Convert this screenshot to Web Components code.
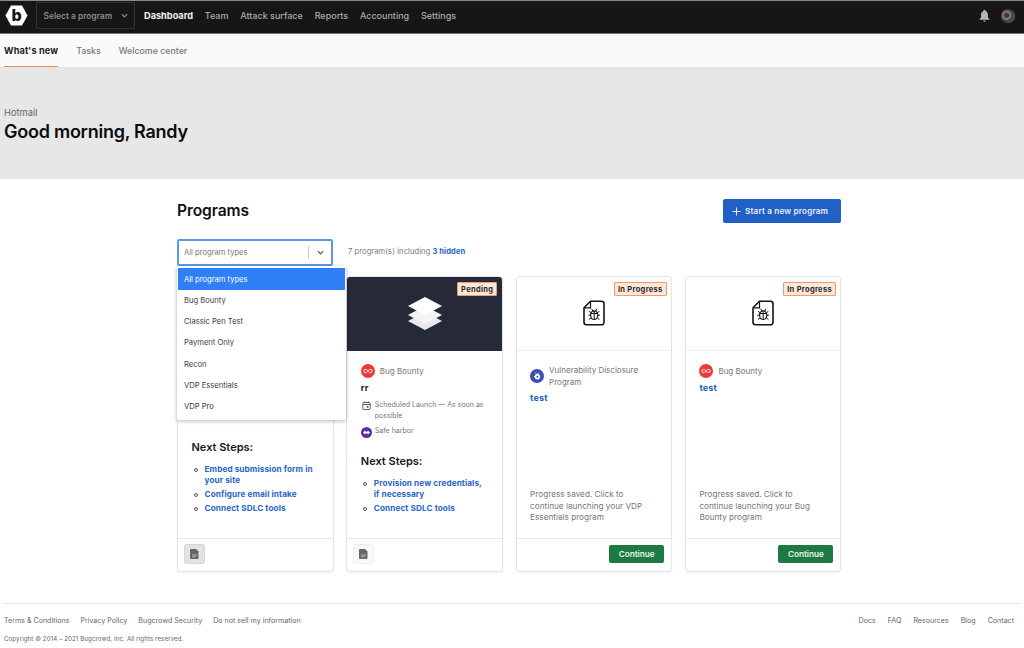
<!DOCTYPE html>
<html lang="en"><head><meta charset="utf-8"><title>Dashboard</title>
<style>
html,body{margin:0;padding:0;background:#fff;font-family:Inter,"Liberation Sans",sans-serif;color:#111}
body{width:1024px;height:648px;overflow:hidden}
</style></head><body>
<bc-app></bc-app>
<script>
const def=(name,html)=>customElements.define(name,class extends HTMLElement{
  connectedCallback(){ if(this.shadowRoot) return; const r=this.attachShadow({mode:'open'}); r.innerHTML=typeof html==='function'?html(this):html; }
});
const icons={
 chev:'<svg width="9" height="9" viewBox="0 0 10 10" fill="none" stroke="currentColor" stroke-width="1.3"><path d="M2 3.5 5 6.5 8 3.5"/></svg>',
 bounty:'<svg width="14" height="14" viewBox="0 0 14 14"><circle cx="7" cy="7" r="7" fill="#ee3b36"/><path d="M7 7C6 5.6 5.2 5.4 4.5 5.4a1.6 1.6 0 0 0 0 3.2C5.2 8.6 6 8.4 7 7c1-1.4 1.8-1.6 2.5-1.6a1.6 1.6 0 0 1 0 3.2C8.8 8.6 8 8.4 7 7Z" fill="none" stroke="#fff" stroke-width=".9"/></svg>',
 vdp:'<svg width="14" height="14" viewBox="0 0 14 14"><circle cx="7" cy="7" r="7" fill="#3f4db0"/><circle cx="7.4" cy="7.8" r="2.7" fill="#fff"/><path d="M5.4 3.8 6.6 5.4M8.6 3.8 7.8 5.4M4 7.6h1.2" stroke="#fff" stroke-width=".9"/><circle cx="7.4" cy="7.8" r="1" fill="#3f4db0"/></svg>',
 bug:'<svg width="24" height="26" viewBox="0 0 24 26" fill="none" stroke="#151515"><path d="M8.5 1.2H19.5a2.5 2.5 0 0 1 2.5 2.5v18.6a2.5 2.5 0 0 1-2.5 2.5H4.5A2.5 2.5 0 0 1 2 22.3V7.8Z" stroke-width="1.6" stroke-linejoin="round"/><path d="M8.5 1.2V7.8H2" stroke-width="1.2"/><ellipse cx="12.2" cy="15.2" rx="3.6" ry="4.3" stroke-width="1.2"/><path d="M8.6 13.5h7.2M12.2 11v8.4M9.8 8.8l1 2.2M14.8 8.8l-1 2.2M8.6 15.2H6.3M15.8 15.2h2.3M9 18l-2 1.4M15.4 18l2 1.4M9 12.6l-2-1.2M15.4 12.6l2-1.2" stroke-width="1"/></svg>',
 layers:'<svg width="36" height="34" viewBox="0 0 36 34"><path d="M18 11 35 20 18 29 1 20Z" fill="#e9e9ec" transform="translate(0 4)"/><path d="M18 6 35 15 18 24 1 15Z" fill="#f4f4f6" transform="translate(0 3)"/><path d="M18 0 35 9 18 18 1 9Z" fill="#fff"/></svg>',
 doc:'<svg width="9" height="10" viewBox="0 0 9 10"><path d="M1 0h5l2.5 2.5V9a1 1 0 0 1-1 1H1A1 1 0 0 1 0 9V1a1 1 0 0 1 1-1Z" fill="#666"/><path d="M2 6h5M2 7.8h3.5" stroke="#d8d8d8" stroke-width=".7"/></svg>',
 cal:'<svg width="9" height="9" viewBox="0 0 9 9" fill="none" stroke="#555"><rect x=".8" y="1.5" width="7.4" height="7" rx=".7" stroke-width=".9"/><path d="M.8 3.6h7.4" stroke-width="1"/><path d="M2.6.3v1.6M6.4.3v1.6" stroke-width=".8"/><rect x="4.7" y="5" width="1.7" height="1.7" fill="#555" stroke="none"/></svg>',
 harbor:'<svg width="11" height="11" viewBox="0 0 10 10"><circle cx="5" cy="5" r="5" fill="#5b2fa8"/><path d="M1.8 5 3.6 3.4 5 4.6 6.4 3.4 8.2 5 6.4 6.6 5 5.4 3.6 6.6Z" fill="#fff"/></svg>'
};
def('bc-topbar',`<style>
:host{display:flex;align-items:center;box-sizing:border-box;height:34px;background:#161616;border-top:1px solid #8a8a8a;border-bottom:1px solid #777;padding:0 9.5px 3px 5px;font-size:9px;color:#aaa;font-weight:500}
.logo{display:block;margin-right:8px}
.sel{display:flex;align-items:center;justify-content:space-between;box-sizing:border-box;width:99px;height:27px;border:1px solid #333;border-radius:1px;padding:0 5px 0 6.5px;font-size:8.4px;font-weight:600;color:#8c8c8c;margin-right:9px}
nav{display:flex;gap:11.8px}
nav b{color:#f2f2f2;font-weight:700;font-size:9.2px}
.r{margin-left:auto;display:flex;align-items:center;gap:11px}
.av{width:14px;height:14px;border-radius:50%;background:radial-gradient(circle at 40% 45%,#3a3a44 0 18%,#a08060 30%,#34343c 55%,#8a7a70 80%)}
</style>
<svg class="logo" width="23" height="21" viewBox="0 0 23 21"><path d="M6 .5H17L22.5 10.5 17 20.5H6L.5 10.5Z" fill="#fff"/><text x="11.5" y="16" text-anchor="middle" font-family="Inter,sans-serif" font-size="16" font-weight="800" fill="#161616">b</text></svg>
<div class="sel"><span>Select a program</span>${icons.chev}</div>
<nav><b>Dashboard</b><span>Team</span><span>Attack surface</span><span>Reports</span><span>Accounting</span><span>Settings</span></nav>
<div class="r"><svg width="11" height="12" viewBox="0 0 11 12"><path d="M5.5 0C6.3 0 6.7.6 6.7 1.2 8.3 1.8 9 3.2 9 5v2.5l1.5 1.7v.6H.5v-.6L2 7.5V5c0-1.8.7-3.2 2.3-3.8C4.3.6 4.7 0 5.5 0ZM4.2 10.5h2.6a1.3 1.3 0 0 1-2.6 0Z" fill="#b5b5b5"/></svg><div class="av"></div></div>`);
def('bc-subnav',`<style>
:host{display:flex;box-sizing:border-box;height:34px;background:#fafafa;border-bottom:1px solid #e4e4e4;padding:0 4px;gap:18px;font-size:8.8px;color:#777;font-weight:500}
span{display:flex;align-items:center;box-sizing:border-box;height:33px}
.on{color:#222;font-weight:700;font-size:9.2px;letter-spacing:.1px;border-bottom:1px solid #f58a4b}
</style><span class="on">What's new</span><span>Tasks</span><span>Welcome center</span>`);
def('bc-hero',`<style>
:host{display:block;box-sizing:border-box;height:111px;background:#e7e7e7;padding:38.6px 4px 0}
p{margin:0 0 2.4px;font-size:9.3px;line-height:12px;color:#666}
h1{margin:0;font-size:18px;line-height:22px;font-weight:600;letter-spacing:-.25px;color:#0c0c0c}
</style><p>Hotmail</p><h1>Good morning, Randy</h1>`);
def('bc-select',`<style>
:host{display:block;position:relative;width:156px;height:27px;font-size:7.6px;color:#333}
.c{display:flex;align-items:center;box-sizing:border-box;height:27px;border:2px solid #5a98ec;border-radius:2px;padding-left:5px;color:#777}
.c span{flex:1}
.i{display:flex;align-items:center;justify-content:center;width:22px;height:13px;border-left:1px solid #ccc;color:#555}
.m{position:absolute;left:0;top:27px;width:169px;box-sizing:border-box;background:#fff;padding:2.4px 0 3px;border-radius:2px;box-shadow:0 1px 4px rgba(0,0,0,.3);z-index:5}
.m div{display:flex;align-items:center;height:21.3px;padding-left:6px;margin:0 1px;color:#3c3c3c}
.m .on{background:#2f80f7;color:#fff}
</style><div class="c"><span>All program types</span><div class="i">${icons.chev}</div></div>
<div class="m"><div class="on">All program types</div><div>Bug Bounty</div><div>Classic Pen Test</div><div>Payment Only</div><div>Recon</div><div>VDP Essentials</div><div>VDP Pro</div></div>`);
def('bc-card',(h)=>{
 const a=n=>h.getAttribute(n);
 const st=a('status');
 const dark=a('dark')!==null;
 return `<style>
:host{display:flex;flex-direction:column;box-sizing:border-box;height:294px;background:#fff;border-radius:3px;box-shadow:0 0 0 1px #e4e4e4,0 1px 3px rgba(0,0,0,.1);font-size:8.2px;min-width:0}
.top{position:relative;box-sizing:border-box;height:74px;padding-bottom:2px;display:flex;align-items:center;justify-content:center;border-bottom:1px solid #eee;border-radius:3px 3px 0 0}
.dark{background:#252938;border-bottom:0;padding-bottom:0}
.bad{position:absolute;top:5px;right:4.5px;box-sizing:border-box;height:14px;display:flex;align-items:center;padding:0 3px;background:#fde7d9;border:1px solid #f19a6b;font-size:7.5px;font-weight:700;letter-spacing:.3px;color:#2b2b2b;border-radius:1px}
.body{flex:1;box-sizing:border-box;padding:${a('pad')||13}px 13.5px 0;display:flex;flex-direction:column;min-height:0}
.foot{box-sizing:border-box;height:33px;padding:0 7px 2px;border-top:1px solid #e8e8e8;display:flex;align-items:center;justify-content:${a('cta')?'flex-end':'flex-start'}}
.cta{box-sizing:border-box;width:55px;height:18px;background:#1c7a42;color:#f2f2f2;border-radius:2px;font-size:8.2px;font-weight:600;display:flex;align-items:center;justify-content:center}
.doc{width:19px;height:18px;border-radius:2px;display:flex;align-items:center;justify-content:center;background:${a('active')!==null?'#e2e2e2':'#f8f8f8'};box-shadow:0 0 0 1px ${a('active')!==null?'#d6d6d6':'#eee'}}
</style>
<div class="top ${dark?'dark':''}">${dark?icons.layers:icons.bug}<div class="bad">${st}</div></div>
<div class="body"><slot></slot></div>
<div class="foot">${a('cta')?`<div class="cta">${a('cta')}</div>`:`<div class="doc">${icons.doc}</div>`}</div>`;
});
def('bc-type',(h)=>`<style>
:host{display:flex;align-items:center;gap:5px;font-size:8px;line-height:12px;color:#777}
svg{flex:none}
</style>${icons[h.getAttribute('icon')]}<span><slot></slot></span>`);
def('bc-meta',(h)=>`<style>
:host{display:flex;gap:3px;font-size:7px;line-height:10.5px;color:#777;margin-top:${h.getAttribute('gap')||0}px}
svg{flex:none;margin-top:1px}
.w{display:flex;justify-content:center;flex:none;width:11px}
</style><div class="w">${icons[h.getAttribute('icon')]}</div><span><slot></slot></span>`);
def('bc-title',(h)=>`<style>
:host{display:block;font-size:9px;font-weight:700;line-height:12px;margin:4px 0 6px;letter-spacing:.2px;color:${h.getAttribute('link')!==null?'#2160bb':'#1a1a1a'}}
</style><slot></slot>`);
def('bc-steps',(h)=>`<style>
:host{display:block;margin-top:${h.getAttribute('top')}px}
h3{margin:0 0 8.5px;font-size:11px;line-height:16px;font-weight:600;color:#181818}
</style><h3>Next Steps:</h3><slot></slot>`);
def('bc-step',`<style>
:host{display:flex;gap:7px;font-size:8.2px;line-height:11.5px;font-weight:700;color:#2a66c4;margin-bottom:2.3px;letter-spacing:.1px}
i{flex:none;box-sizing:border-box;width:4px;height:4px;margin:4px 0 0 2px;border:1px solid #555;border-radius:50%}
</style><i></i><span><slot></slot></span>`);
def('bc-note',`<style>
:host{display:block;margin-top:auto;margin-bottom:14px;font-size:8.2px;line-height:11.6px;color:#777}
</style><slot></slot>`);
def('bc-programs',`<style>
:host{display:block;box-sizing:border-box;width:664px;margin:0 auto 0 177px;padding-top:20px}
.h{display:flex;justify-content:space-between;align-items:center;height:24px}
h2{margin:-1px 0 0;font-size:15.6px;font-weight:600;letter-spacing:-.1px;color:#111}
.btn{display:flex;align-items:center;gap:4px;box-sizing:border-box;width:118px;height:24px;padding-left:9px;background:#2161c6;color:#e6eefb;border-radius:2px;font-size:8.2px;font-weight:600;letter-spacing:.15px}
.f{display:flex;align-items:center;gap:15px;margin:16px 0 11px}
.n{font-size:7.5px;color:#777;margin-top:-3px;letter-spacing:.1px}
.n b{color:#2a66c4;font-weight:700}
.g{display:grid;grid-template-columns:repeat(4,154.5px);column-gap:14.8px;padding-left:1px}
</style>
<div class="h"><h2>Programs</h2><div class="btn"><svg width="9" height="9" viewBox="0 0 9 9" stroke="#e6eefb" stroke-width="1"><path d="M4.5.5v8M.5 4.5h8"/></svg>Start a new program</div></div>
<div class="f"><bc-select></bc-select><div class="n">7 program(s) including <b>3 hidden</b></div></div>
<div class="g"><slot></slot></div>`);
def('bc-footer',`<style>
:host{display:block;margin:32px 4px 0;border-top:1px solid #e8e8e8;padding-top:12px;font-size:7.1px;color:#666}
.a{display:flex;justify-content:space-between;padding-right:6px;line-height:10px}
.l{display:flex;gap:11px}.l.r{gap:12px}
p{margin:8px 0 0;font-size:6.15px;line-height:10px;letter-spacing:.1px}
</style><div class="a"><div class="l"><span>Terms &amp; Conditions</span><span>Privacy Policy</span><span>Bugcrowd Security</span><span>Do not sell my information</span></div>
<div class="l r"><span>Docs</span><span>FAQ</span><span>Resources</span><span>Blog</span><span>Contact</span></div></div>
<p>Copyright © 2014 – 2021 Bugcrowd, Inc. All rights reserved.</p>`);
def('bc-app',`<style>:host{display:block}</style>
<bc-topbar></bc-topbar><bc-subnav></bc-subnav><bc-hero></bc-hero>
<bc-programs>
<bc-card status="In Progress" active pad="88">
 <bc-steps top="0"><bc-step>Embed submission form in your site</bc-step><bc-step>Configure email intake</bc-step><bc-step>Connect SDLC tools</bc-step></bc-steps>
</bc-card>
<bc-card status="Pending" dark>
 <bc-type icon="bounty">Bug Bounty</bc-type>
 <bc-title>rr</bc-title>
 <bc-meta icon="cal">Scheduled Launch — As soon as possible</bc-meta>
 <bc-meta icon="harbor" gap="5">Safe harbor</bc-meta>
 <bc-steps top="15"><bc-step>Provision new credentials, if necessary</bc-step><bc-step>Connect SDLC tools</bc-step></bc-steps>
</bc-card>
<bc-card status="In Progress" cta="Continue">
 <bc-type icon="vdp">Vulnerability Disclosure Program</bc-type>
 <bc-title link>test</bc-title>
 <bc-note>Progress saved. Click to continue launching your VDP Essentials program</bc-note>
</bc-card>
<bc-card status="In Progress" cta="Continue">
 <bc-type icon="bounty">Bug Bounty</bc-type>
 <bc-title link>test</bc-title>
 <bc-note>Progress saved. Click to continue launching your Bug Bounty program</bc-note>
</bc-card>
</bc-programs>
<bc-footer></bc-footer>`);
</script>
</body></html>
